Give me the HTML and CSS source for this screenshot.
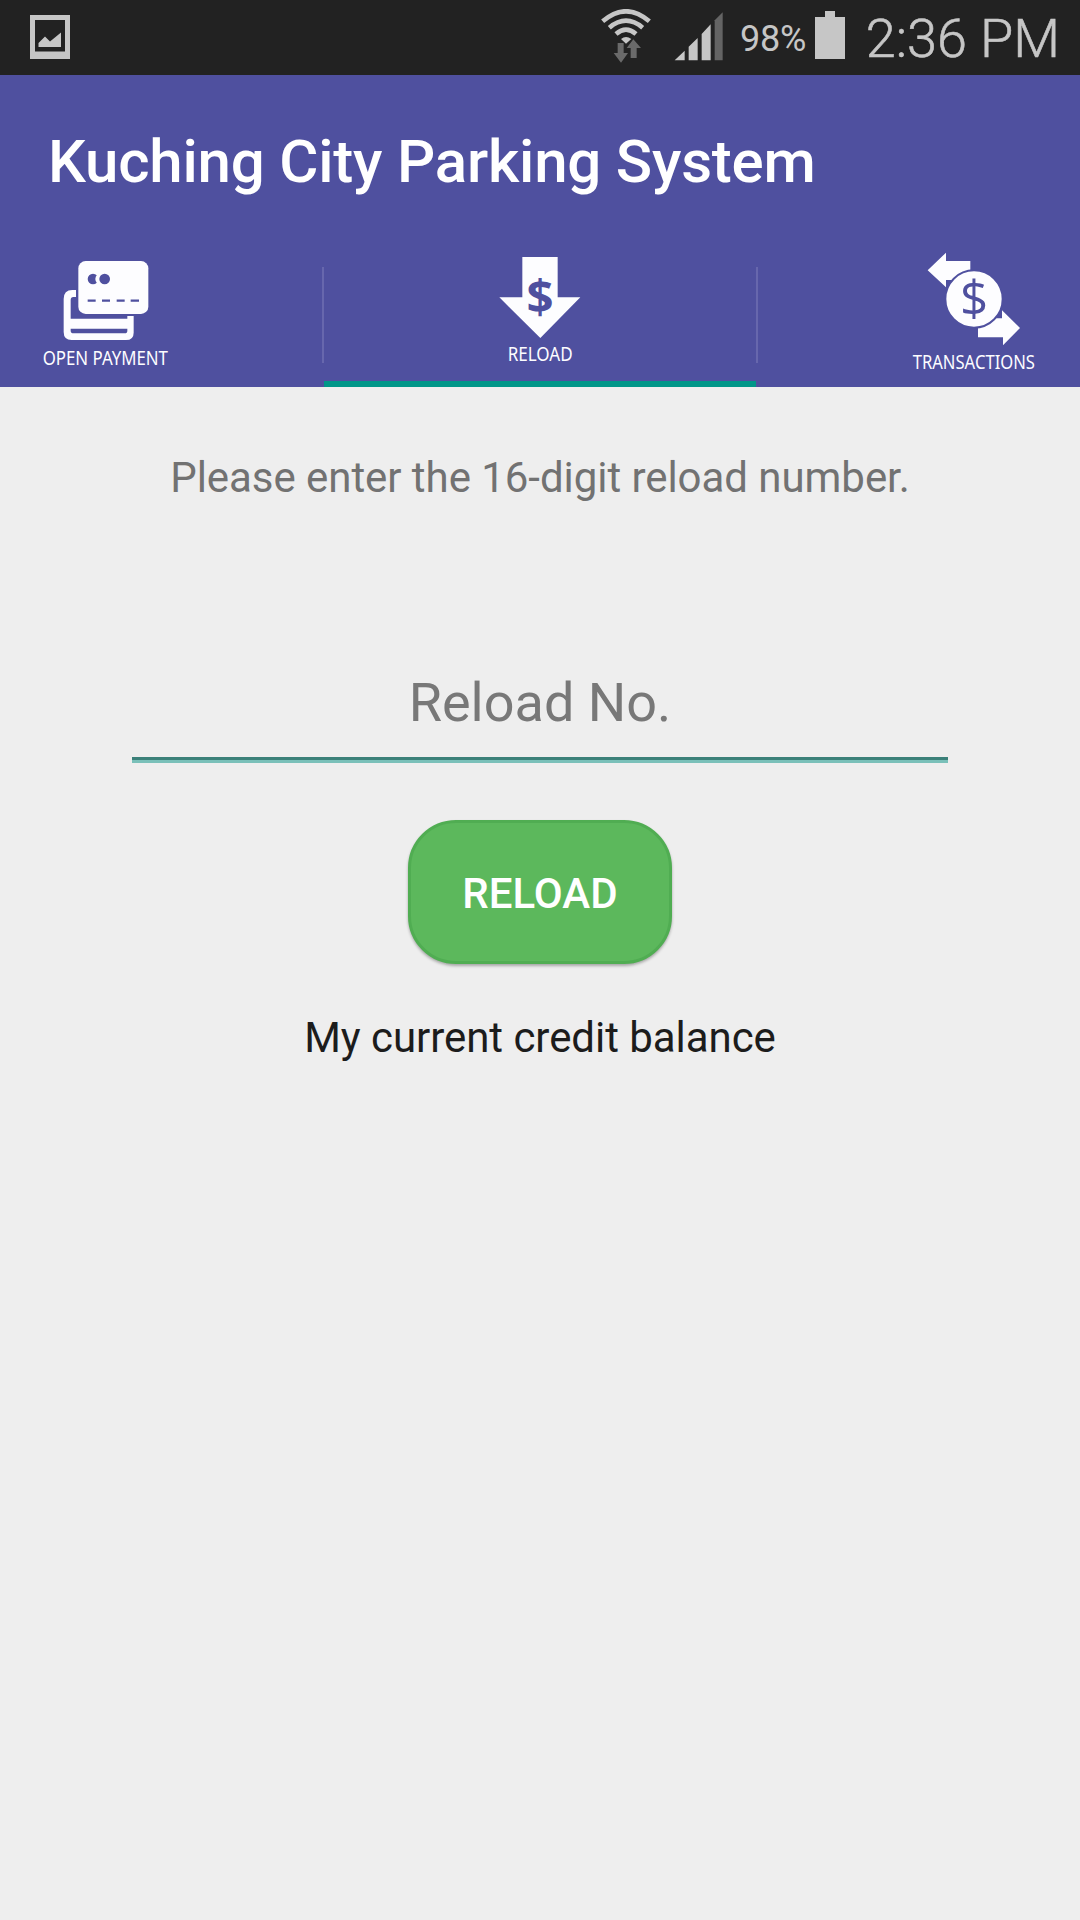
FILE: index.html
```
<!DOCTYPE html>
<html lang="en">
<head>
    <meta charset="UTF-8">
    <meta name="viewport" content="width=device-width, initial-scale=1.0">
    <title>Kuching City Parking System</title>
    <link rel="stylesheet" href="styles.css">
</head>
<body>
    <!-- Status bar -->
    <div class="status-bar">
        <svg class="picture-icon" width="40" height="44" viewBox="0 0 40 44">
            <path fill="#c6c6c6" fill-rule="evenodd" d="M0 0H40V44H0ZM5 5V36.500H35V5Z"/>
            <path fill="#c6c6c6" d="M8.500 32V28L15 21.500L20 26.500L31 17.500V32Z"/>
        </svg>
        <div class="status-right">
            <svg class="wifi-icon" width="50" height="54" viewBox="0 0 150 162">
                <g fill="none" stroke="#c6c6c6" stroke-width="14">
                    <path d="M5 37Q75 -23 145 37"/>
                    <path d="M25 56Q75 14 125 56"/>
                    <path d="M45 75Q75 49 105 75"/>
                </g>
                <path fill="#c6c6c6" d="M60 90Q75 78 91 90L75 104Z"/>
                <path fill="#6a6a6a" d="M50 102H68V132H81L60 161L38 132H50ZM89 147V117H77L97 91L120 117H107V147Z"/>
            </svg>
            <svg class="signal-icon" width="49" height="49" viewBox="0 0 147 147">
                <path fill="#c6c6c6" d="M2 145L32 116V145ZM44 104L71 78V145H44ZM83 66L110 37V145H83Z"/>
                <path fill="#646464" d="M122 25L146 1V145H122Z"/>
            </svg>
            <span class="battery-level">98%</span>
            <svg class="battery-icon" width="30" height="48" viewBox="0 0 30 48">
                <path fill="#c6c6c6" d="M10 0H20V6H30V48H0V6H10Z"/>
            </svg>
            <span class="clock">2:36 PM</span>
        </div>
    </div>

    <header class="header">
        <h1>Kuching City Parking System</h1>
        <nav class="tabs">
            <a class="tab tab-payment">
                <svg width="180" height="147" viewBox="0 0 540 441">
                    <path fill="#fdfdff" fill-rule="evenodd" d="M168 150V171H160Q152 171 152 180V236H322V228H341V278Q341 300 318 300H155Q131 300 131 276V177Q131 150 157 150ZM152 266V272Q152 280 161 280H314Q322 280 322 272V266Z"/>
                    <rect x="175" y="63" width="210" height="159" rx="22" fill="#fdfdff"/>
                    <circle cx="219" cy="117" r="16" fill="#4f509f"/>
                    <circle cx="244" cy="117" r="18" fill="#fdfdff"/>
                    <circle cx="254" cy="117" r="16" fill="#4f509f"/>
                    <path stroke="#4f509f" stroke-width="7" d="M203 182H227M246 182H270M290 182H314M332 182H357"/>
                    <text class="tab-label" x="68" y="375" textLength="376" lengthAdjust="spacingAndGlyphs">OPEN PAYMENT</text>
                </svg>
            </a>
            <a class="tab tab-reload active">
                <svg width="180" height="147" viewBox="0 0 540 441">
                    <path fill="#fdfdff" d="M217 51H323V172H391L271 294L148 172H217Z"/>
                    <text class="dollar dollar-bold" x="270" y="222">$</text>
                    <text class="tab-label" x="173" y="363" textLength="195" lengthAdjust="spacingAndGlyphs">RELOAD</text>
                </svg>
            </a>
            <a class="tab tab-transactions">
                <svg width="180" height="147" viewBox="0 0 540 441">
                    <path fill="#fdfdff" d="M113 91L168 38V63H241V120H168V142ZM264 235H336V211L390 264L339 316V292H264Z"/>
                    <circle cx="252" cy="177" r="86" fill="#fdfdff" stroke="#4f509f" stroke-width="6"/>
                    <text class="dollar" x="252" y="227">$</text>
                    <text class="tab-label" x="68" y="387" textLength="367" lengthAdjust="spacingAndGlyphs">TRANSACTIONS</text>
                </svg>
            </a>
        </nav>
    </header>

    <main class="content">
        <p class="hint">Please enter the 16-digit reload number.</p>
        <input class="reload-input" type="text" placeholder="Reload No.">
        <button class="reload-button">RELOAD</button>
        <p class="balance">My current credit balance</p>
    </main>
</body>
</html>
```
FILE: styles.css
```
* {
    box-sizing: border-box;
}
body {
    margin: 0;
    min-height: 1920px;
    background-color: #eeeeee;
    font-family: Roboto, sans-serif;
}
svg {
    display: block;
    flex: none;
}
.status-bar {
    display: flex;
    justify-content: space-between;
    height: 75px;
    padding: 0 20px 0 30px;
    background-color: #222222;
    color: #c6c6c6;
}
.picture-icon {
    margin-top: 15px;
}
.status-right {
    display: flex;
    white-space: nowrap;
}
.wifi-icon {
    margin-top: 9px;
    margin-right: 23px;
}
.signal-icon {
    margin-top: 12px;
    margin-right: 17px;
}
.battery-level {
    width: 67px;
    margin-right: 8px;
    font-size: 36px;
    line-height: 78px;
    letter-spacing: -0.2px;
}
.battery-icon {
    margin-top: 11px;
}
.clock {
    width: 215px;
    font-size: 54px;
    font-weight: 300;
    line-height: 78px;
    text-align: right;
    -webkit-text-stroke: 0.6px #c6c6c6;
}
.header {
    height: 312px;
    background-color: #4f509f;
    color: #fff;
}
.header h1 {
    height: 165px;
    margin: 0;
    padding-left: 48px;
    font-size: 60px;
    font-weight: 500;
    line-height: 173px;
    letter-spacing: -0.2px;
}
.tabs {
    display: flex;
    height: 147px;
}
.tab {
    display: flex;
    width: 324px;
    height: 147px;
}
.tab-payment {
    padding-left: 20px;
    background: linear-gradient(#6767ad, #6767ad) right 27px / 2px 96px no-repeat;
}
.tab-reload {
    width: 432px;
    justify-content: center;
}
.tab-transactions {
    justify-content: flex-end;
    padding-right: 10px;
    background: linear-gradient(#6767ad, #6767ad) left 27px / 2px 96px no-repeat;
}
.tab.active {
    background: linear-gradient(#009688, #009688) bottom / 100% 6px no-repeat;
}
.tab-label {
    fill: #fdfdff;
    font-family: "Noto Sans", sans-serif;
    font-size: 58px;
}
.dollar {
    fill: #4f509f;
    font-family: "Open Sans", sans-serif;
    font-size: 148px;
    text-anchor: middle;
}
.dollar-bold {
    font-size: 142px;
    font-weight: 700;
}
.content {
    display: flex;
    flex-direction: column;
    align-items: center;
}
.hint {
    margin: 66px 0 0;
    color: #727272;
    font-size: 42px;
    line-height: 50px;
    letter-spacing: -0.05px;
}
.reload-input {
    width: 816px;
    height: 120px;
    margin-top: 140px;
    padding: 2px 0 0;
    border: none;
    border-bottom: 3px solid #7ac0b9;
    box-shadow: inset 0 -3px #3b8079;
    background: transparent;
    color: #222;
    font-family: inherit;
    font-size: 54px;
    text-align: center;
    outline: none;
}
.reload-input::placeholder {
    color: #787878;
    opacity: 1;
}
.reload-button {
    width: 264px;
    height: 144px;
    margin-top: 57px;
    padding: 2px 0 0;
    border: 3px solid #50ad52;
    border-radius: 48px;
    background-color: #5cb85c;
    box-shadow: 0 2px 3px rgba(0, 0, 0, 0.3);
    color: #fff;
    font-family: inherit;
    font-size: 42px;
    font-weight: 500;
}
.balance {
    margin: 49px 0 0;
    color: #1c1c1c;
    font-size: 42px;
    line-height: 50px;
    letter-spacing: -0.05px;
}
```
